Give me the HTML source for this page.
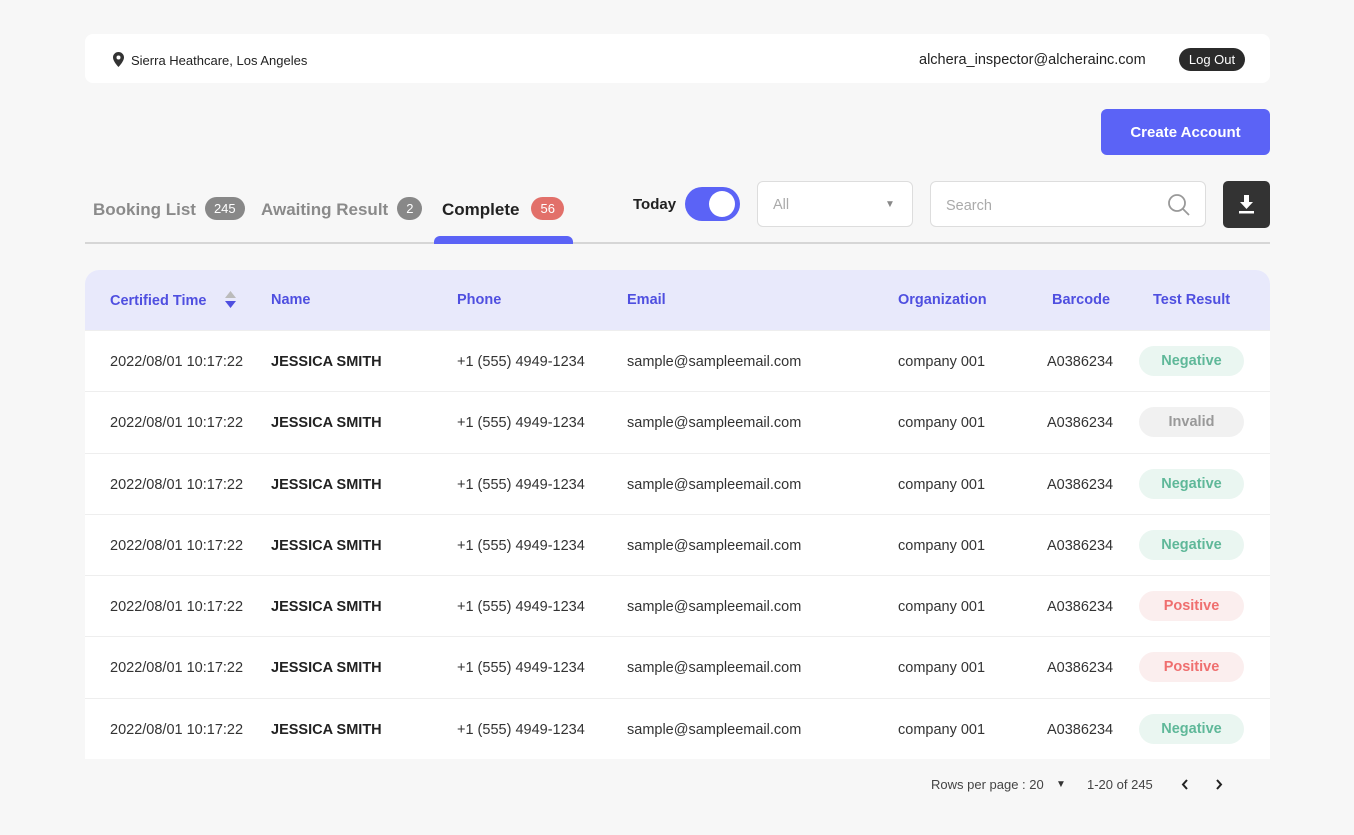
<!DOCTYPE html><html><head><style>
*{box-sizing:border-box;margin:0;padding:0}
body{width:1354px;height:835px;background:#f7f7f7;font-family:"Liberation Sans",sans-serif;position:relative;overflow:hidden;color:#333}
.abs{position:absolute}
.top{left:85px;top:34px;width:1185px;height:49px;background:#fff;border-radius:8px}
.btn{left:1101px;top:109px;width:169px;height:46px;background:#5b63f6;border-radius:6px;color:#fff;font-weight:bold;font-size:15px;text-align:center;line-height:48px}
.tab{top:197px;font-size:17px;font-weight:bold;color:#8a8a8a}
.bd{display:inline-block;color:#fff;font-size:13px;font-weight:normal;border-radius:12px;height:23px;line-height:23px;padding:0 9px;vertical-align:2px;margin-left:9px}
.table{left:85px;top:270px;width:1185px;height:489px;background:#fff;border-radius:14px 14px 0 0;overflow:hidden}
.head{height:60px;background:#e8e9fb;position:relative}
.head span{position:absolute;top:22px;color:#4f4fe0;font-weight:bold;font-size:14.5px}
.row{height:61.3px;border-top:1px solid #eee;position:relative;font-size:14.5px}
.row span{position:absolute;top:23px}
.row b{position:absolute;top:23px;color:#222}
.pill{position:absolute;left:1054px;top:15px;width:105px;height:30px;border-radius:15px;text-align:center;line-height:31px;font-weight:bold;font-size:14.5px}
.neg{background:#eaf6f1;color:#5fb899}.inv{background:#f1f1f1;color:#999}.pos{background:#fbeeee;color:#ef6f6f}
</style></head><body>
<div class="abs top">
<svg class="abs" style="left:28px;top:18px" width="11" height="15" viewBox="0 0 11 15"><path d="M5.5 0C2.5 0 0 2.4 0 5.4 0 9.5 5.5 15 5.5 15S11 9.5 11 5.4C11 2.4 8.5 0 5.5 0zm0 7.5a2 2 0 110-4 2 2 0 010 4z" fill="#333"/></svg>
<div class="abs" style="left:46px;top:19px;font-size:13px;color:#222">Sierra Heathcare, Los Angeles</div>
<div class="abs" style="left:834px;top:18px;font-size:14.5px;color:#222">alchera_inspector@alcherainc.com</div>
<div class="abs" style="left:1094px;top:14px;width:66px;height:23px;background:#2b2b2b;color:#fff;border-radius:12px;font-size:13px;text-align:center;line-height:23px">Log Out</div>
</div>
<div class="abs btn">Create Account</div>
<div class="abs tab" style="left:93px">Booking List<span class="bd" style="background:#888">245</span></div>
<div class="abs tab" style="left:261px">Awaiting Result<span class="bd" style="background:#888">2</span></div>
<div class="abs tab" style="left:442px;color:#222">Complete<span class="bd" style="background:#e2706a;margin-left:12px">56</span></div>
<div class="abs" style="left:85px;top:242px;width:1185px;height:2px;background:#d6d6d6"></div>
<div class="abs" style="left:434px;top:236px;width:139px;height:8px;background:#5b63f6;border-radius:6px 6px 0 0"></div>
<div class="abs" style="left:633px;top:196px;font-size:15px;font-weight:bold;color:#222">Today</div>
<div class="abs" style="left:685px;top:187px;width:55px;height:34px;background:#5b63f6;border-radius:17px"><div class="abs" style="left:24px;top:4px;width:26px;height:26px;background:#fff;border-radius:50%"></div></div>
<div class="abs" style="left:757px;top:181px;width:156px;height:46px;background:#fff;border:1px solid #ddd;border-radius:6px"><span class="abs" style="left:15px;top:15px;color:#aaa;font-size:14.5px">All</span><span class="abs" style="left:127px;top:17px;color:#888;font-size:10px">▼</span></div>
<div class="abs" style="left:930px;top:181px;width:276px;height:46px;background:#fff;border:1px solid #ddd;border-radius:6px"><span class="abs" style="left:15px;top:16px;color:#aaa;font-size:14.5px">Search</span>
<svg class="abs" style="left:236px;top:11px" width="24" height="24" viewBox="0 0 24 24"><circle cx="10" cy="10" r="8" fill="none" stroke="#999" stroke-width="1.8"/><path d="M16 16l6 6" stroke="#999" stroke-width="1.8"/></svg></div>
<div class="abs" style="left:1223px;top:181px;width:47px;height:47px;background:#333;border-radius:5px"><svg class="abs" style="left:15px;top:14px" width="17" height="19" viewBox="0 0 17 19"><path d="M6 0h5v7h4l-6.5 7L2 7h4z" fill="#fff"/><rect x="1" y="16" width="15" height="2.5" fill="#fff"/></svg></div>
<div class="abs table">
<div class="head"><span style="left:25px;top:23px">Certified Time</span>
<svg class="abs" style="left:140px;top:21px" width="11" height="17" viewBox="0 0 11 17"><path d="M5.5 0L11 7H0z" fill="#bbb"/><path d="M0 10h11l-5.5 7z" fill="#4f4fe0"/></svg>
<span style="left:186px">Name</span><span style="left:372px">Phone</span><span style="left:542px">Email</span><span style="left:813px">Organization</span><span style="left:967px">Barcode</span><span style="left:1068px">Test Result</span></div>
<div class="row"><span style="left:25px">2022/08/01 10:17:22</span><b style="left:186px">JESSICA SMITH</b><span style="left:372px">+1 (555) 4949-1234</span><span style="left:542px">sample@sampleemail.com</span><span style="left:813px">company 001</span><span style="left:962px">A0386234</span><div class="pill neg">Negative</div></div>
<div class="row"><span style="left:25px">2022/08/01 10:17:22</span><b style="left:186px">JESSICA SMITH</b><span style="left:372px">+1 (555) 4949-1234</span><span style="left:542px">sample@sampleemail.com</span><span style="left:813px">company 001</span><span style="left:962px">A0386234</span><div class="pill inv">Invalid</div></div>
<div class="row"><span style="left:25px">2022/08/01 10:17:22</span><b style="left:186px">JESSICA SMITH</b><span style="left:372px">+1 (555) 4949-1234</span><span style="left:542px">sample@sampleemail.com</span><span style="left:813px">company 001</span><span style="left:962px">A0386234</span><div class="pill neg">Negative</div></div>
<div class="row"><span style="left:25px">2022/08/01 10:17:22</span><b style="left:186px">JESSICA SMITH</b><span style="left:372px">+1 (555) 4949-1234</span><span style="left:542px">sample@sampleemail.com</span><span style="left:813px">company 001</span><span style="left:962px">A0386234</span><div class="pill neg">Negative</div></div>
<div class="row"><span style="left:25px">2022/08/01 10:17:22</span><b style="left:186px">JESSICA SMITH</b><span style="left:372px">+1 (555) 4949-1234</span><span style="left:542px">sample@sampleemail.com</span><span style="left:813px">company 001</span><span style="left:962px">A0386234</span><div class="pill pos">Positive</div></div>
<div class="row"><span style="left:25px">2022/08/01 10:17:22</span><b style="left:186px">JESSICA SMITH</b><span style="left:372px">+1 (555) 4949-1234</span><span style="left:542px">sample@sampleemail.com</span><span style="left:813px">company 001</span><span style="left:962px">A0386234</span><div class="pill pos">Positive</div></div>
<div class="row"><span style="left:25px">2022/08/01 10:17:22</span><b style="left:186px">JESSICA SMITH</b><span style="left:372px">+1 (555) 4949-1234</span><span style="left:542px">sample@sampleemail.com</span><span style="left:813px">company 001</span><span style="left:962px">A0386234</span><div class="pill neg">Negative</div></div>
</div>
<div class="abs" style="left:931px;top:777px;font-size:13px;color:#444">Rows per page : 20</div>
<div class="abs" style="left:1056px;top:779px;font-size:10px;color:#333">▼</div>
<div class="abs" style="left:1087px;top:777px;font-size:13px;color:#444">1-20 of 245</div>
<svg class="abs" style="left:1181px;top:779px" width="8" height="11" viewBox="0 0 8 11"><path d="M6 1L2 5.5 6 10" fill="none" stroke="#222" stroke-width="2"/></svg>
<svg class="abs" style="left:1215px;top:779px" width="8" height="11" viewBox="0 0 8 11"><path d="M2 1l4 4.5L2 10" fill="none" stroke="#222" stroke-width="2"/></svg>
</body></html>
